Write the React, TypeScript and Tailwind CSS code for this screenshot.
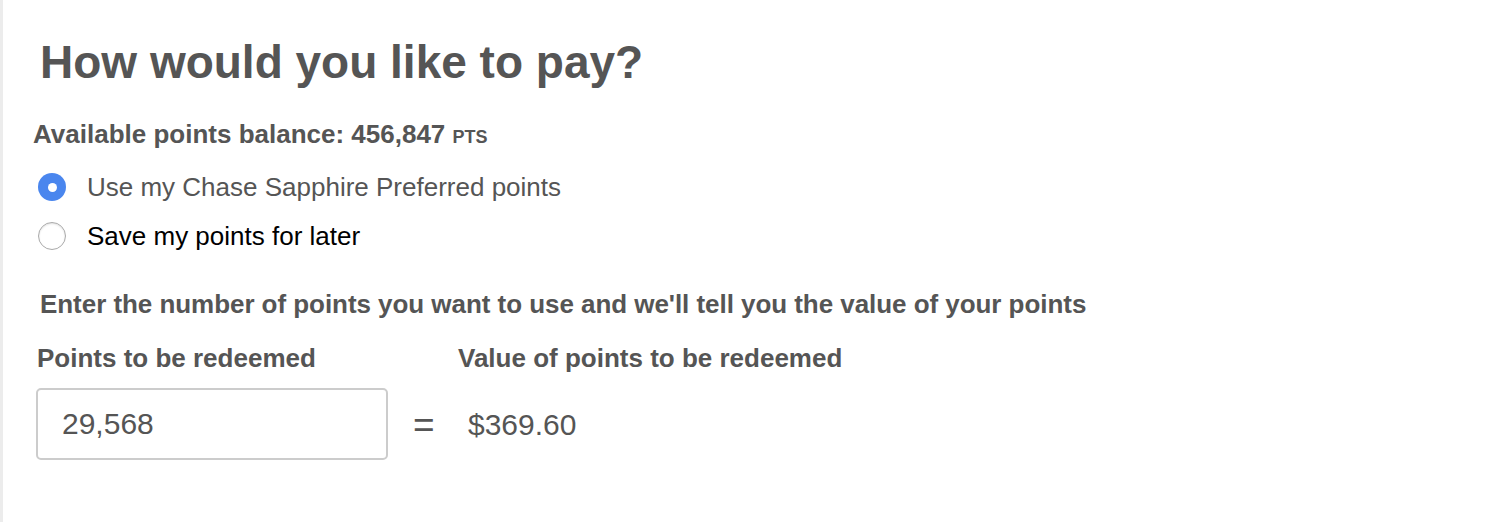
import { useState } from "react";

export default function App() {
  const [choice, setChoice] = useState<"use" | "save">("use");
  const [points, setPoints] = useState("29,568");

  return (
    <div className="w-[1490px] h-[522px] bg-white border-l-[3px] border-[#ececec] font-['Liberation_Sans',Arial,sans-serif] text-[#555]">
      <div className="pl-[30px] pt-[36px]">
        <h1 className="pl-[7px] text-[46px] leading-[52px] font-bold">How would you like to pay?</h1>

        <p className="mt-[32px] text-[26px] leading-[28px] font-bold">
          Available points balance: 456,847 <span className="text-[18px] font-bold">PTS</span>
        </p>

        {/* payment choice */}
        <div className="mt-[22px] flex flex-col gap-[21px] pl-[5px]">
          <label className="flex items-center gap-[21px] cursor-pointer">
            <span
              onClick={() => setChoice("use")}
              className={
                choice === "use"
                  ? "w-[28px] h-[28px] rounded-full bg-[#4a86ee] flex items-center justify-center"
                  : "w-[28px] h-[28px] rounded-full border border-[#aaa] bg-white shadow-[inset_0_1px_2px_rgba(0,0,0,0.12)]"
              }
            >
              {choice === "use" && <span className="w-[9px] h-[9px] rounded-full bg-white" />}
            </span>
            <span className="text-[26px] leading-[28px] text-[#555]">Use my Chase Sapphire Preferred points</span>
          </label>
          <label className="flex items-center gap-[21px] cursor-pointer">
            <span
              onClick={() => setChoice("save")}
              className={
                choice === "save"
                  ? "w-[28px] h-[28px] rounded-full bg-[#4a86ee] flex items-center justify-center"
                  : "w-[28px] h-[28px] rounded-full border border-[#aaa] bg-white shadow-[inset_0_1px_2px_rgba(0,0,0,0.12)]"
              }
            >
              {choice === "save" && <span className="w-[9px] h-[9px] rounded-full bg-white" />}
            </span>
            <span className="text-[26px] leading-[28px] text-black">Save my points for later</span>
          </label>
        </div>

        <p className="mt-[40px] pl-[7px] text-[26px] leading-[28px] font-bold tracking-[-0.05px]">
          Enter the number of points you want to use and we'll tell you the value of your points
        </p>

        <div className="mt-[26px] grid grid-cols-[352px_70px_auto] grid-rows-[28px_72px] gap-y-[16px] pl-[3px]">
          <div className="text-[26px] leading-[28px] font-bold pl-[1px]">Points to be redeemed</div>
          <div />
          <div className="text-[26px] leading-[28px] font-bold">Value of points to be redeemed</div>
          <input
            value={points}
            onChange={(e) => setPoints(e.target.value)}
            className="w-[352px] h-[72px] rounded-[5px] border-2 border-[#ccc] px-[24px] text-[30px] text-[#555] outline-none font-['Liberation_Sans',Arial,sans-serif]"
          />
          <div className="flex items-center pl-[25px] text-[37px] leading-none">=</div>
          <div className="flex items-center pl-[10px] text-[30px]">$369.60</div>
        </div>
      </div>
    </div>
  );
}
